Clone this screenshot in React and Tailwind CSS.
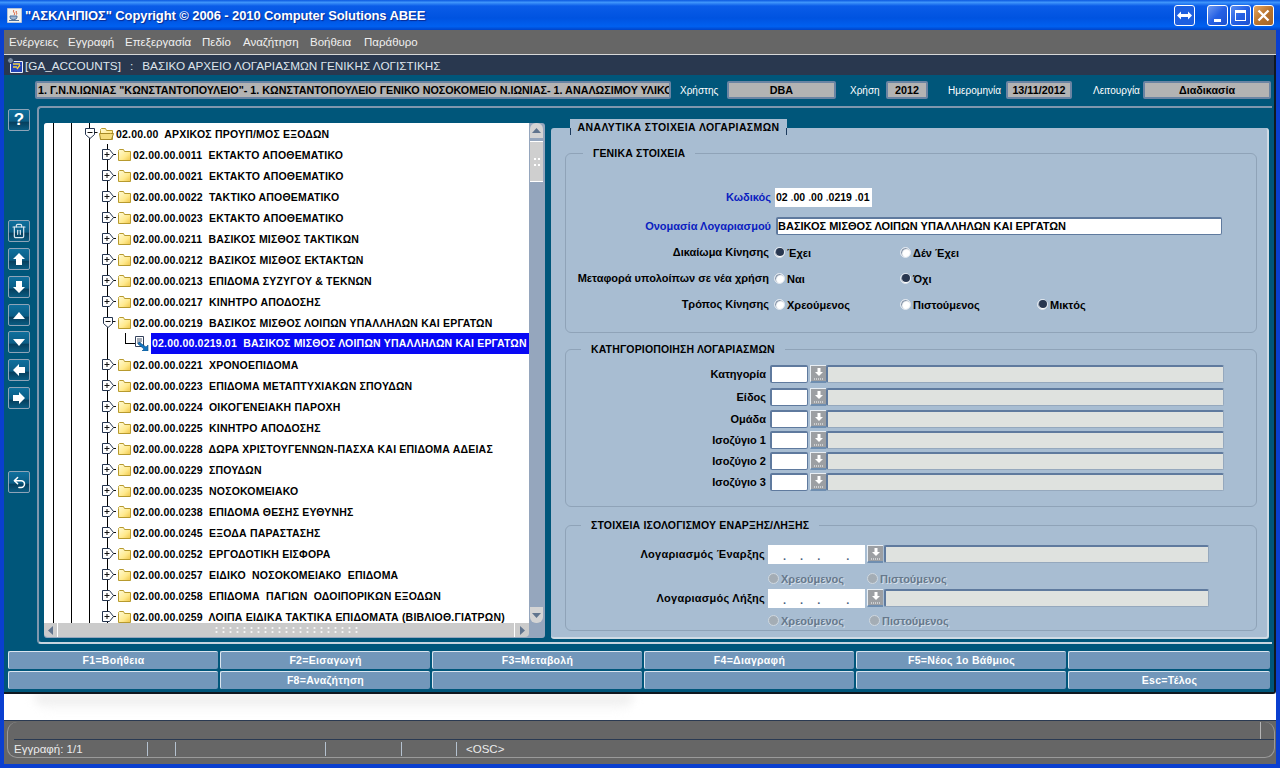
import React from 'react'
import { Trash2, Undo2 } from 'lucide-react'

const menus = [
  ['Ενέργειες', 'w-[59px]'],
  ['Εγγραφή', 'w-[57px]'],
  ['Επεξεργασία', 'w-[77px]'],
  ['Πεδίο', 'w-[41px]'],
  ['Αναζήτηση', 'w-[67px]'],
  ['Βοήθεια', 'w-[54px]'],
  ['Παράθυρο', 'w-[70px]'],
]

const accounts = [
  ['02.00.00.0011', 'ΕΚΤΑΚΤΟ ΑΠΟΘΕΜΑΤΙΚΟ'],
  ['02.00.00.0021', 'ΕΚΤΑΚΤΟ ΑΠΟΘΕΜΑΤΙΚΟ'],
  ['02.00.00.0022', 'ΤΑΚΤΙΚΟ ΑΠΟΘΕΜΑΤΙΚΟ'],
  ['02.00.00.0023', 'ΕΚΤΑΚΤΟ ΑΠΟΘΕΜΑΤΙΚΟ'],
  ['02.00.00.0211', 'ΒΑΣΙΚΟΣ ΜΙΣΘΟΣ ΤΑΚΤΙΚΩΝ'],
  ['02.00.00.0212', 'ΒΑΣΙΚΟΣ ΜΙΣΘΟΣ ΕΚΤΑΚΤΩΝ'],
  ['02.00.00.0213', 'ΕΠΙΔΟΜΑ ΣΥΖΥΓΟΥ & ΤΕΚΝΩΝ'],
  ['02.00.00.0217', 'ΚΙΝΗΤΡΟ ΑΠΟΔΟΣΗΣ'],
  ['02.00.00.0219', 'ΒΑΣΙΚΟΣ ΜΙΣΘΟΣ ΛΟΙΠΩΝ ΥΠΑΛΛΗΛΩΝ ΚΑΙ ΕΡΓΑΤΩΝ', 'open'],
  ['02.00.00.0219.01', 'ΒΑΣΙΚΟΣ ΜΙΣΘΟΣ ΛΟΙΠΩΝ ΥΠΑΛΛΗΛΩΝ ΚΑΙ ΕΡΓΑΤΩΝ', 'leaf'],
  ['02.00.00.0221', 'ΧΡΟΝΟΕΠΙΔΟΜΑ'],
  ['02.00.00.0223', 'ΕΠΙΔΟΜΑ ΜΕΤΑΠΤΥΧΙΑΚΩΝ ΣΠΟΥΔΩΝ'],
  ['02.00.00.0224', 'ΟΙΚΟΓΕΝΕΙΑΚΗ ΠΑΡΟΧΗ'],
  ['02.00.00.0225', 'ΚΙΝΗΤΡΟ ΑΠΟΔΟΣΗΣ'],
  ['02.00.00.0228', 'ΔΩΡΑ ΧΡΙΣΤΟΥΓΕΝΝΩΝ-ΠΑΣΧΑ ΚΑΙ ΕΠΙΔΟΜΑ ΑΔΕΙΑΣ'],
  ['02.00.00.0229', 'ΣΠΟΥΔΩΝ'],
  ['02.00.00.0235', 'ΝΟΣΟΚΟΜΕΙΑΚΟ'],
  ['02.00.00.0238', 'ΕΠΙΔΟΜΑ ΘΕΣΗΣ ΕΥΘΥΝΗΣ'],
  ['02.00.00.0245', 'ΕΞΟΔΑ ΠΑΡΑΣΤΑΣΗΣ'],
  ['02.00.00.0252', 'ΕΡΓΟΔΟΤΙΚΗ ΕΙΣΦΟΡΑ'],
  ['02.00.00.0257', 'ΕΙΔΙΚΟ  ΝΟΣΟΚΟΜΕΙΑΚΟ  ΕΠΙΔΟΜΑ'],
  ['02.00.00.0258', 'ΕΠΙΔΟΜΑ  ΠΑΓΙΩΝ  ΟΔΟΙΠΟΡΙΚΩΝ ΕΞΟΔΩΝ'],
  ['02.00.00.0259', 'ΛΟΙΠΑ ΕΙΔΙΚΑ ΤΑΚΤΙΚΑ ΕΠΙΔΟΜΑΤΑ (ΒΙΒΛΙΟΘ.ΓΙΑΤΡΩΝ)'],
]

const categories = [
  ['Κατηγορία', 'mt-[9px]'],
  ['Είδος', 'mt-[5px]'],
  ['Ομάδα', 'mt-[4px]'],
  ['Ισοζύγιο 1', 'mt-[3px]'],
  ['Ισοζύγιο 2', 'mt-[3px]'],
  ['Ισοζύγιο 3', 'mt-[3px]'],
]

const keysTop = ['F1=Βοήθεια', 'F2=Εισαγωγή', 'F3=Μεταβολή', 'F4=Διαγραφή', 'F5=Νέος 1ο Βάθμιος', '']
const keysBottom = ['', 'F8=Αναζήτηση', '', '', '', 'Esc=Τέλος']

function Expander({ open }) {
  return (
    <svg width="14" height="13" viewBox="0 0 14 13" className="shrink-0">
      {open ? (
        <path d="M1.5 1.5h9v6l-4.5 4l-4.5-4z" fill="#fff" stroke="#24344e" />
      ) : (
        <path d="M0.5 1.5h7l4 5l-4 5h-7z" fill="#fff" stroke="#24344e" />
      )}
      <path d={open ? 'M3.5 5.5h5' : 'M2.5 6.5h5M5 4v5'} stroke="#111" fill="none" />
      <path d={open ? 'M10.5 5.5h3' : 'M11.5 6.5h2.5'} stroke="#111" fill="none" />
    </svg>
  )
}

function Folder({ open }) {
  return (
    <svg width="15" height="14" viewBox="0 0 15 14" className="shrink-0">
      <defs>
        <linearGradient id="folderFill" x1="0" y1="0" x2="1" y2="1">
          <stop offset="0" stopColor="#fffbd8" />
          <stop offset="0.6" stopColor="#ffe98c" />
          <stop offset="1" stopColor="#efc54a" />
        </linearGradient>
      </defs>
      <path d="M1.5 3.5v-1l1-1h4l1 2h6v9h-12z" fill="url(#folderFill)" stroke="#b79a2e" />
      {open && <path d="M0.5 6.5h11l3 0l-2 6h-11z" fill="#f4dc7c" stroke="#a58a28" />}
    </svg>
  )
}

function LeafIcon() {
  return (
    <svg width="14" height="15" viewBox="0 0 14 15" className="shrink-0">
      <path d="M0.5 0.5h8v10h-8z" fill="#fff" stroke="#33415c" />
      <path d="M2 3h5M2 5h5M2 7h4" stroke="#4a5a70" />
      <path d="M4 6l7 5l2-2v6h-6l2-2l-6-5z" fill="#1577c0" stroke="#0b4d85" strokeWidth="0.6" />
    </svg>
  )
}

function Guides({ count }) {
  return Array.from({ length: count }).map((_, i) => (
    <span key={i} className="w-[18px] h-full shrink-0 border-l border-black" />
  ))
}

function TreeRow({ code, name, kind }) {
  if (kind === 'leaf') {
    return (
      <div className="flex h-[21px] pl-[9px] items-center">
        <Guides count={4} />
        <span className="w-[10px] h-[11px] self-start shrink-0 border-l border-b border-black" />
        <LeafIcon />
        <div className="ml-[2px] flex-1 h-full flex items-center pl-[1px] pt-[1px] bg-[#0808f4] text-white whitespace-pre overflow-hidden">
          {code}  {name}
        </div>
      </div>
    )
  }
  return (
    <div className="flex h-[21px] pl-[9px] items-center">
      <Guides count={3} />
      <div className="flex items-center h-full w-[26px] shrink-0 border-l border-black">
        <span className="-ml-[6px] flex"><Expander open={kind === 'open'} /></span>
        <span className="ml-[1px] flex"><Folder /></span>
      </div>
      <span className="whitespace-pre mt-[2px]">{code}  {name}</span>
    </div>
  )
}

function ToolButton({ children, className = '' }) {
  return (
    <div className={`w-[22px] h-[22px] flex items-center justify-center border border-[#8ea4b8] rounded-[2px] bg-[linear-gradient(#0f6f9c_0%,#0a5d86_55%,#06405f_62%,#0a5c82_100%)] text-white ${className}`}>
      {children}
    </div>
  )
}

function Radio({ on, off }) {
  return (
    <span className={`w-[11px] h-[11px] rounded-full shrink-0 flex items-center justify-center border ${off ? 'bg-[#a4adb5] border-[#cfd8e0]' : 'bg-white border-[#dfe6ee] shadow-[inset_1px_1px_1px_#7f8fa5]'}`}>
      {on && <span className="w-[8px] h-[8px] rounded-full bg-[#283750]" />}
    </span>
  )
}

function RadioLabel({ on, off, label, className = '' }) {
  return (
    <div className={`flex items-center shrink-0 ${className}`}>
      <Radio on={on} off={off} />
      <span className={`ml-[2px] mt-[2px] font-bold text-[11px] ${off ? 'text-[#66788c] [text-shadow:1px_1px_0_#d5dfe8]' : 'text-black'}`}>{label}</span>
    </div>
  )
}

function LovButton() {
  return (
    <div className="w-[16px] h-[18px] shrink-0 flex flex-col items-center justify-center bg-[#9c9fa3] border-l border-t border-[#e8eef4] border-b-2 border-b-[#6f8eb0]">
      <svg width="10" height="13" viewBox="0 0 10 13">
        <path d="M3.5 1h3v4h2.5l-4 4l-4-4h2.5z" fill="#fff" />
        <path d="M0 12h10" stroke="#fff" strokeDasharray="1 1" />
      </svg>
    </div>
  )
}

function LongField({ className }) {
  return <div className={`h-[18px] bg-[#dfe2df] border-t-2 border-l-2 border-[#5f7a9e] border-r border-b border-r-[#95a8bd] border-b-[#95a8bd] rounded-[2px] ${className}`} />
}

function HeaderField({ className, children, align = 'text-center' }) {
  return (
    <div className={`h-[18px] shrink-0 bg-[#b3b3b3] border-2 border-[#6b84a3] rounded-[2px] font-bold text-[10.75px] leading-[14px] text-black overflow-hidden whitespace-pre ${align} ${className}`}>
      {children}
    </div>
  )
}

function HeaderLabel({ className, children }) {
  return <span className={`text-white text-[10px] shrink-0 ${className}`}>{children}</span>
}

function Group({ title, className, legend = 'ml-[15px]', children }) {
  return (
    <fieldset className={`border border-[#8fa3b8] rounded-[6px] ${className}`}>
      <legend className={`${legend} px-[10px] h-[14px] leading-[15px] font-bold text-[10.5px] tracking-[0.15px] text-black`}>{title}</legend>
      {children}
    </fieldset>
  )
}

function WinButton({ children, className = '' }) {
  return (
    <div className={`w-[21px] h-[21px] flex items-center justify-center rounded-[3px] border border-white ${className}`}>
      {children}
    </div>
  )
}

function AccountRow({ label, className }) {
  return (
    <div className={`flex items-start ${className}`}>
      <span className="w-[202px] h-[19px] leading-[19px] pr-[3px] text-right font-bold text-[11px] tracking-[0.25px] text-black">{label}</span>
      <div className="w-[97px] h-[19px] bg-white flex items-center text-[#4a6080] font-bold text-[11px] pl-[15px] gap-[14px] pt-[3px] shrink-0">
        <span>.</span><span>.</span><span>.</span><span className="ml-[12px]">.</span>
      </div>
      <span className="ml-[2px]"><LovButton /></span>
      <LongField className="w-[325px] ml-[1px]" />
    </div>
  )
}

export default function App() {
  return (
    <div className="w-[1280px] h-[768px] overflow-hidden flex flex-col bg-[#0a3fd0] font-['Liberation_Sans',Arial,sans-serif]">
      {/* title bar */}
      <div className="h-[30px] shrink-0 flex items-center pl-[7px] pr-[6px] pt-[1px] bg-[linear-gradient(#0a58e0_0%,#3f95fb_8%,#0a5ce8_20%,#0053e0_60%,#0060f0_88%,#0044c8_100%)]">
        <svg width="15" height="15" viewBox="0 0 15 15" className="shrink-0">
          <path d="M0.5 0.5h14v14h-14z" fill="#f2f2ee" stroke="#b7c3d6" />
          <path d="M7 2c-2 2 2 3 0 5M9.5 3c-1.4 1.4 1 2 0 3.5" stroke="#d8532a" fill="none" />
          <path d="M3 8h7c0 3-1 3.5-3.5 3.5S3 11 3 8zM2 12.5h10" stroke="#4d6f9a" fill="#9db5d0" />
        </svg>
        <span className="ml-[3px] mt-[1px] text-white font-bold text-[13px] tracking-[-0.1px] whitespace-pre [text-shadow:1px_1px_1px_#0a2a90]">"ΑΣΚΛΗΠΙΟΣ" Copyright © 2006 - 2010 Computer Solutions ABEE</span>
        <WinButton className="ml-auto bg-[#1d5fe0]">
          <svg width="15" height="9" viewBox="0 0 15 9"><path d="M0 4.5l4-4v2.5h7v-2.5l4 4l-4 4v-2.5h-7v2.5z" fill="#fff" /></svg>
        </WinButton>
        <WinButton className="ml-[12px] bg-[linear-gradient(135deg,#6f9af0,#2560e4_50%,#1c50d0)]">
          <span className="w-[7px] h-[3px] bg-white mt-[10px] -ml-[1px]" />
        </WinButton>
        <WinButton className="ml-[2px] bg-[linear-gradient(135deg,#5a8cf0,#2560e4_50%,#1c50d0)]">
          <span className="w-[11px] h-[11px] border border-white border-t-[3px]" />
        </WinButton>
        <WinButton className="ml-[2px] bg-[linear-gradient(135deg,#e8a860,#b8742e_50%,#a4642a)]">
          <svg width="13" height="13" viewBox="0 0 13 13"><path d="M1.5 1.5l10 10M11.5 1.5l-10 10" stroke="#fff" strokeWidth="2.4" /></svg>
        </WinButton>
      </div>

      <div className="flex-1 flex flex-col mx-[4px] mb-[4px] bg-white min-h-0">
        {/* menu */}
        <div className="h-[25px] shrink-0 flex items-center pl-[5px] pt-[2px] bg-[#666666] border-b border-[#d8d8d8] text-[#f0f0f0] text-[11.5px]">
          {menus.map(([m, w]) => (
            <span key={m} className={`${w} shrink-0 whitespace-pre`}>{m}</span>
          ))}
        </div>

        {/* form window */}
        <div className="h-[639px] shrink-0 flex flex-col bg-[#00567a] border-r-2 border-b-2 border-[#101820] rounded-br-[3px]">
          <div className="h-[20px] shrink-0 flex items-center pl-[3px] bg-[#29384f] text-[#dfe5ec] text-[11.75px] whitespace-pre">
            <svg width="16" height="16" viewBox="0 0 16 16" className="shrink-0">
              <path d="M3.5 4.5h12v11h-12z" fill="#2344b8" stroke="#e8eef8" />
              <path d="M6 7h7M6 10h4M10 12l3-4" stroke="#f5d040" strokeWidth="1.4" />
              <circle cx="3.5" cy="3.5" r="3" fill="#7a8aa0" stroke="#20304a" />
            </svg>
            <span className="ml-[2px] pt-[2px]">[GA_ACCOUNTS]</span>
            <span className="ml-[9px] pt-[2px]">:</span>
            <span className="ml-[9px] pt-[2px]">ΒΑΣΙΚΟ ΑΡΧΕΙΟ ΛΟΓΑΡΙΑΣΜΩΝ ΓΕΝΙΚΗΣ ΛΟΓΙΣΤΙΚΗΣ</span>
          </div>

          {/* header fields */}
          <div className="h-[31px] shrink-0 flex items-center pl-[31px] pb-[1px]">
            <HeaderField className="w-[636px] pl-[1px]" align="text-left">1. Γ.Ν.Ν.ΙΩΝΙΑΣ "ΚΩΝΣΤΑΝΤΟΠΟΥΛΕΙΟ"- 1. ΚΩΝΣΤΑΝΤΟΠΟΥΛΕΙΟ ΓΕΝΙΚΟ ΝΟΣΟΚΟΜΕΙΟ Ν.ΙΩΝΙΑΣ- 1. ΑΝΑΛΩΣΙΜΟΥ ΥΛΙΚΟ</HeaderField>
            <HeaderLabel className="ml-[9px] w-[47px]">Χρήστης</HeaderLabel>
            <HeaderField className="w-[109px]">DBA</HeaderField>
            <HeaderLabel className="ml-[14px] w-[36px]">Χρήση</HeaderLabel>
            <HeaderField className="w-[42px]">2012</HeaderField>
            <HeaderLabel className="ml-[20px] w-[58px]">Ημερομηνία</HeaderLabel>
            <HeaderField className="w-[66px]">13/11/2012</HeaderField>
            <HeaderLabel className="ml-[21px] w-[50px]">Λειτουργία</HeaderLabel>
            <HeaderField className="w-[128px]">Διαδικασία</HeaderField>
          </div>

          {/* body */}
          <div className="flex h-[538px] shrink-0">
            <div className="w-[33px] shrink-0 pl-[4px] flex flex-col">
              <ToolButton className="mt-[3px] font-bold text-[17px]">?</ToolButton>
              <ToolButton className="mt-[89px]"><Trash2 size={16} strokeWidth={1.8} color="#dbe7ef" /></ToolButton>
              <ToolButton className="mt-[6px]"><svg width="12" height="12" viewBox="0 0 12 12"><path d="M6 0l6 6h-3v6h-6v-6h-3z" fill="#fff" /></svg></ToolButton>
              <ToolButton className="mt-[6px]"><svg width="12" height="12" viewBox="0 0 12 12"><path d="M6 12l6-6h-3v-6h-6v6h-3z" fill="#fff" /></svg></ToolButton>
              <ToolButton className="mt-[6px]"><svg width="12" height="7" viewBox="0 0 12 7"><path d="M6 0l6 7h-12z" fill="#fff" /></svg></ToolButton>
              <ToolButton className="mt-[5px]"><svg width="12" height="7" viewBox="0 0 12 7"><path d="M6 7l6-7h-12z" fill="#fff" /></svg></ToolButton>
              <ToolButton className="mt-[6px]"><svg width="12" height="12" viewBox="0 0 12 12"><path d="M0 6l6-6v3h6v6h-6v3z" fill="#fff" /></svg></ToolButton>
              <ToolButton className="mt-[6px]"><svg width="12" height="12" viewBox="0 0 12 12"><path d="M12 6l-6-6v3h-6v6h6v3z" fill="#fff" /></svg></ToolButton>
              <ToolButton className="mt-[62px]"><Undo2 size={15} strokeWidth={2.4} /></ToolButton>
            </div>

            {/* framed panel */}
            <div className="w-[1235px] h-[538px] shrink-0 flex border-t-2 border-l-2 border-b-2 border-[#7f97ae] rounded-tl-[4px] rounded-bl-[4px] border-b-[#c8d4de]">
              {/* tree */}
              <div className="ml-[5px] mt-[15px] w-[501px] h-[515px] shrink-0 flex flex-col bg-[#95a6bd] rounded-[3px] overflow-hidden">
                <div className="flex h-[500px] shrink-0">
                  <div className="w-[485px] h-[500px] shrink-0 bg-white overflow-hidden font-bold text-[10.5px] tracking-[0.2px] text-black">
                    <div className="flex h-[21px] pl-[9px] items-center">
                      <Guides count={2} />
                      <div className="flex items-center h-full w-[27px] shrink-0 border-l border-black">
                        <span className="-ml-[6px] flex"><Expander open /></span>
                        <span className="ml-[1px] flex"><Folder open /></span>
                      </div>
                      <span className="whitespace-pre mt-[2px]">02.00.00  ΑΡΧΙΚΟΣ ΠΡΟΥΠ/ΜΟΣ ΕΞΟΔΩΝ</span>
                    </div>
                    {accounts.map(([code, name, kind]) => (
                      <TreeRow key={code} code={code} name={name} kind={kind} />
                    ))}
                  </div>
                  {/* vertical scrollbar */}
                  <div className="w-[16px] shrink-0 flex flex-col pl-[1px] pr-[2px]">
                    <div className="h-[15px] bg-[#d4d4d4] rounded-t-[6px] flex items-center justify-center">
                      <svg width="9" height="5" viewBox="0 0 9 5"><path d="M4.5 0l4.5 5h-9z" fill="#60748e" /></svg>
                    </div>
                    <div className="mt-[3px] h-[41px] bg-[#cfcfcf] border-y border-white flex items-center justify-center">
                      <span className="w-[8px] h-[12px] bg-[radial-gradient(circle,#ffffff_1px,transparent_1.2px)] bg-[length:4px_6px]" />
                    </div>
                    <div className="flex-1" />
                    <div className="h-[16px] bg-[#d4d4d4] rounded-b-[6px] flex items-center justify-center">
                      <svg width="9" height="5" viewBox="0 0 9 5"><path d="M4.5 5l4.5-5h-9z" fill="#60748e" /></svg>
                    </div>
                  </div>
                </div>
                {/* horizontal scrollbar */}
                <div className="h-[14px] w-[485px] shrink-0 flex bg-[#cbcbcb] rounded-b-[4px]">
                  <div className="w-[14px] flex items-center justify-center border-r border-white">
                    <svg width="5" height="9" viewBox="0 0 5 9"><path d="M0 4.5l5-4.5v9z" fill="#60748e" /></svg>
                  </div>
                  <div className="flex-1 flex items-center justify-center">
                    <span className="w-[147px] h-[8px] bg-[radial-gradient(circle,#f4f4f4_1px,transparent_1.2px)] bg-[length:7px_4px]" />
                  </div>
                  <div className="w-[15px] flex items-center justify-center border-l border-white">
                    <svg width="5" height="9" viewBox="0 0 5 9"><path d="M5 4.5l-5-4.5v9z" fill="#60748e" /></svg>
                  </div>
                </div>
              </div>

              {/* details */}
              <div className="ml-[6px] mt-[20px] w-[718px] h-[511px] shrink-0 relative bg-[#a8bdd2] rounded-[3px] px-[14px] border-r-2 border-b-2 border-[#d0dbe5]">
                <div className="absolute left-[19px] -top-[9px] w-[217px] h-[16px] pt-[1px] bg-[#a8bdd2] flex items-center justify-center font-bold text-[10.5px] tracking-[0.4px] text-black">
                  ΑΝΑΛΥΤΙΚΑ ΣΤΟΙΧΕΙΑ ΛΟΓΑΡΙΑΣΜΩΝ
                  <span className="absolute left-0 bottom-0 w-px h-[7px] bg-[#1c3a5c]" />
                  <span className="absolute right-0 bottom-0 w-px h-[7px] bg-[#1c3a5c]" />
                </div>

                <Group title="ΓΕΝΙΚΑ ΣΤΟΙΧΕΙΑ" legend="ml-[17px]" className="mt-[18px] w-[692px] h-[187px]">
                  <div className="mt-[28px] flex items-center">
                    <span className="w-[205px] text-right font-bold text-[11px] text-[#0a20c0]">Κωδικός</span>
                    <div className="ml-[4px] w-[97px] h-[19px] bg-white flex items-center pl-[1px] pt-[1px] font-bold text-[10.5px] text-black whitespace-pre">02<span className="text-[#51688a]"> .</span>00<span className="text-[#51688a]"> .</span>00<span className="text-[#51688a]"> .</span>0219<span className="text-[#51688a]"> .</span>01</div>
                  </div>
                  <div className="mt-[10px] flex items-center">
                    <span className="w-[205px] text-right font-bold text-[11px] text-[#0a20c0]">Ονομασία Λογαριασμού</span>
                    <div className="ml-[5px] w-[446px] h-[18px] bg-white border-2 border-r border-b border-[#5f7a9e] rounded-[2px] flex items-center font-bold text-[11px] text-black">ΒΑΣΙΚΟΣ ΜΙΣΘΟΣ ΛΟΙΠΩΝ ΥΠΑΛΛΗΛΩΝ ΚΑΙ ΕΡΓΑΤΩΝ</div>
                  </div>
                  <div className="mt-[9px] flex items-center h-[16px]">
                    <span className="w-[203px] text-right font-bold text-[11px] text-black">Δικαίωμα Κίνησης</span>
                    <RadioLabel on label="Έχει" className="ml-[5px] w-[126px]" />
                    <RadioLabel label="Δέν Έχει" />
                  </div>
                  <div className="mt-[10px] flex items-center h-[16px]">
                    <span className="w-[203px] text-right font-bold text-[11px] text-black">Μεταφορά υπολοίπων σε νέα χρήση</span>
                    <RadioLabel label="Ναι" className="ml-[5px] w-[126px]" />
                    <RadioLabel on label="Όχι" />
                  </div>
                  <div className="mt-[10px] flex items-center h-[16px]">
                    <span className="w-[203px] text-right font-bold text-[11px] text-black">Τρόπος Κίνησης</span>
                    <RadioLabel label="Χρεούμενος" className="ml-[5px] w-[126px]" />
                    <RadioLabel label="Πιστούμενος" className="w-[137px]" />
                    <RadioLabel on label="Μικτός" />
                  </div>
                </Group>

                <Group title="ΚΑΤΗΓΟΡΙΟΠΟΙΗΣΗ ΛΟΓΑΡΙΑΣΜΩΝ" className="mt-[9px] w-[692px] h-[165px]">
                  {categories.map(([label, mt]) => (
                    <div key={label} className={`flex items-center ${mt}`}>
                      <span className="w-[200px] text-right font-bold text-[11px] text-black">{label}</span>
                      <div className="ml-[4px] w-[38px] h-[18px] shrink-0 bg-white border-2 border-r border-b border-[#5f7a9e] rounded-[2px]" />
                      <span className="ml-[2px]"><LovButton /></span>
                      <LongField className="w-[398px]" />
                    </div>
                  ))}
                </Group>

                <Group title="ΣΤΟΙΧΕΙΑ ΙΣΟΛΟΓΙΣΜΟΥ ΕΝΑΡΞΗΣ/ΛΗΞΗΣ" className="mt-[11px] w-[692px] h-[113px]">
                  <AccountRow label="Λογαριασμός Έναρξης" className="mt-[13px]" />
                  <div className="flex items-center h-[16px] mt-[6px] pl-[202px]">
                    <RadioLabel off label="Χρεούμενος" className="w-[99px]" />
                    <RadioLabel off label="Πιστούμενος" />
                  </div>
                  <AccountRow label="Λογαριασμός Λήξης" className="mt-[3px]" />
                  <div className="flex items-center h-[16px] mt-[4px] pl-[202px]">
                    <RadioLabel off label="Χρεούμενος" className="w-[101px]" />
                    <RadioLabel off label="Πιστούμενος" />
                  </div>
                </Group>
              </div>
            </div>
          </div>

          {/* function keys */}
          <div className="mt-[7px] pl-[4px] grid grid-cols-[210px_210px_210px_210px_210px_202px] gap-x-[2px] gap-y-[2px]">
            {[...keysTop, ...keysBottom].map((k, i) => (
              <div key={i} className="h-[18px] pt-[1px] flex items-center justify-center bg-[#7297ba] border-t border-l border-[#dbe6f0] rounded-[2px] text-white font-bold text-[10.5px] tracking-[0.3px]">{k}</div>
            ))}
          </div>
        </div>

        {/* shadow strip */}
        <div className="flex-1 pl-[30px] overflow-hidden">
          <div className="w-[600px] h-[16px] rounded-b-[20px] bg-[linear-gradient(#e8e8e8,#fcfcfc)] blur-[5px]" />
        </div>

        {/* status bar */}
        <div className="h-[44px] shrink-0 flex flex-col bg-[#666666] border-t border-[#2a3a52] pt-[1px] pb-[6px] pl-[3px] pr-[1px]">
          <div className="flex-1 flex flex-col border border-t-0 border-[#9a9a9a] rounded-l-[10px] rounded-r-[10px] pl-[6px]">
            <div className="h-[18px] flex justify-end border-b border-[#2a3a52] pr-[13px]">
              <span className="w-px h-full bg-[#b5b5b5]" />
            </div>
            <div className="flex-1 flex items-center text-[#ececec] text-[11.5px] whitespace-pre">
              <span className="w-[133px] shrink-0 h-[14px] leading-[14px]">Εγγραφή: 1/1</span>
              <span className="w-[28px] h-[14px] shrink-0 border-l border-[#b5c2d0]" />
              <span className="w-[150px] h-[14px] shrink-0 border-l border-[#b5c2d0]" />
              <span className="w-[76px] h-[14px] shrink-0 border-l border-[#b5c2d0]" />
              <span className="w-[55px] h-[14px] shrink-0 border-l border-[#b5c2d0]" />
              <span className="h-[14px] leading-[14px] pl-[9px] border-l border-[#b5c2d0]">&lt;OSC&gt;</span>
            </div>
          </div>
        </div>
      </div>
    </div>
  )
}
